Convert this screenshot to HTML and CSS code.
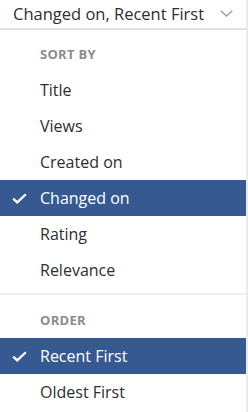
FILE: index.html
```html
<!DOCTYPE html>
<html lang="en">
<head>
  <meta charset="UTF-8" />
  <meta name="viewport" content="width=device-width, initial-scale=1.0" />
  <title>Sort menu</title>
  <link rel="stylesheet" href="styles.css">
</head>
<body>
  <div class="sort-picker">
    <button class="sort-toggle" type="button">
      <span class="sort-current">Changed on, Recent First</span>
      <svg class="chevron" width="13" height="7" viewBox="0 0 13 7" aria-hidden="true">
        <path d="M0.7 0.7 L6.5 6 L12.3 0.7" fill="none" stroke="#9a9a9a" stroke-width="1.3" />
      </svg>
    </button>

    <div class="sort-menu">
      <ul class="menu-group">
        <li class="group-title">Sort by</li>
        <li class="menu-item">Title</li>
        <li class="menu-item">Views</li>
        <li class="menu-item">Created on</li>
        <li class="menu-item selected">
          <svg class="check" width="15" height="11" viewBox="0 0 15 11" aria-hidden="true">
            <path d="M1.2 5.6 L5.2 9.4 L13.8 1.2" fill="none" stroke="#fff" stroke-width="2.2" />
          </svg>
          Changed on
        </li>
        <li class="menu-item">Rating</li>
        <li class="menu-item">Relevance</li>
      </ul>
      <ul class="menu-group">
        <li class="group-title">Order</li>
        <li class="menu-item selected">
          <svg class="check" width="15" height="11" viewBox="0 0 15 11" aria-hidden="true">
            <path d="M1.2 5.6 L5.2 9.4 L13.8 1.2" fill="none" stroke="#fff" stroke-width="2.2" />
          </svg>
          Recent First
        </li>
        <li class="menu-item">Oldest First</li>
      </ul>
    </div>
  </div>
</body>
</html>
```

FILE: styles.css
```css
:root {
  --text-main: #2c2e33;
  --text-muted: #8c8c8c;
  --line: #e2e2e2;
  --stripe: #ebebeb;
  --selected-bg: #365991;
}

* {
  box-sizing: border-box;
  margin: 0;
  padding: 0;
}

body {
  font-family: 'Open Sans', 'Liberation Sans', sans-serif;
  background: var(--stripe);
  color: var(--text-main);
  width: 248px;
  height: 412px;
  overflow: hidden;
}

.sort-picker {
  width: 246px;
  min-height: 412px;
  background: #fff;
}

.sort-toggle {
  display: flex;
  align-items: center;
  justify-content: space-between;
  width: 100%;
  height: 30px;
  padding: 0 13px 2px 13px;
  border: 0;
  border-bottom: 2px solid var(--line);
  background: #fff;
  font-family: inherit;
  font-size: 16.5px;
  color: var(--text-main);
  text-align: left;
}

.chevron { margin-top: 1px; }

.menu-group {
  list-style: none;
  padding: 6px 0 5px;
}

.menu-group + .menu-group {
  border-top: 2px solid #eeeeee;
  padding-top: 7px;
}

.group-title {
  height: 36px;
  display: flex;
  align-items: center;
  padding-left: 40px;
  font-size: 13px;
  font-weight: 700;
  letter-spacing: 0.3px;
  text-transform: uppercase;
  color: var(--text-muted);
}

.menu-item {
  position: relative;
  height: 36px;
  display: flex;
  align-items: center;
  padding-left: 40px;
  font-size: 16px;
}

.menu-item.selected {
  background: var(--selected-bg);
  color: #fff;
}

.check {
  position: absolute;
  left: 12px;
  top: 13px;
}
```
